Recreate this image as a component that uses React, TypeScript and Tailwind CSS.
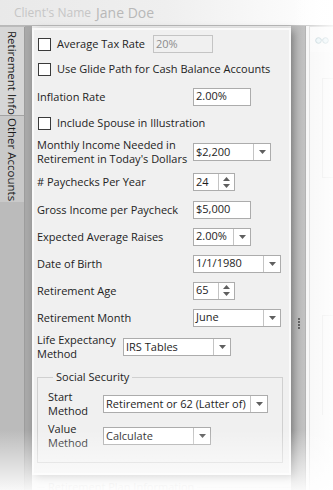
import React from 'react'

// ── Small controls ────────────────────────────────────────────────────────────

const Arrow = ({ up = false }: { up?: boolean }) => (
  <svg width="7" height="4" viewBox="0 0 7 4">
    <path d={up ? 'M0 4h7L3.5 0z' : 'M0 0h7L3.5 4z'} fill="#5f5f5f" />
  </svg>
)

const Checkbox = () => (
  <span className="block w-[13px] h-[13px] border border-[#3a3a3a] bg-white shrink-0" />
)

const TextBox = ({ value, w, disabled = false }: { value: string; w: string; disabled?: boolean }) => (
  <div
    className={`${w} h-[18px] flex items-center px-[2px] border ${
      disabled ? 'border-[#c4c4c4] bg-[#f0f0f0] text-[#8c8c8c]' : 'border-[#acacac] bg-white text-[#1e1e1e]'
    }`}
  >
    {value}
  </div>
)

const Combo = ({ value, w }: { value: string; w: string }) => (
  <div className={`${w} h-[18px] flex border border-[#acacac] bg-white`}>
    <div className="flex-1 flex items-center px-[2px] text-[#1e1e1e] whitespace-nowrap overflow-hidden">{value}</div>
    <div className="w-[17px] border-l border-[#c4c4c4] flex items-center justify-center">
      <Arrow />
    </div>
  </div>
)

const Spin = ({ value }: { value: string }) => (
  <div className="w-[42px] h-[18px] flex border border-[#acacac] bg-white">
    <div className="flex-1 flex items-center px-[2px] text-[#1e1e1e]">{value}</div>
    <div className="w-[16px] border-l border-[#c4c4c4] flex flex-col items-center justify-center gap-[3px]">
      <Arrow up />
      <Arrow />
    </div>
  </div>
)

// ── Form rows ─────────────────────────────────────────────────────────────────

const CheckRow = ({ label, h, children }: { label: string; h: string; children?: React.ReactNode }) => (
  <div className={`${h} flex items-center`}>
    <div className="ml-[1px]"><Checkbox /></div>
    <span className="ml-[6px] mr-[8px] whitespace-nowrap">{label}</span>
    {children}
  </div>
)

const FieldRow = ({
  label,
  h,
  lw = 'w-[156px]',
  children,
}: {
  label: React.ReactNode
  h: string
  lw?: string
  children: React.ReactNode
}) => (
  <div className={`${h} flex items-center`}>
    <div className={`${lw} shrink-0 leading-[14px]`}>{label}</div>
    {children}
  </div>
)

const SideTab = ({ label, h, active = false }: { label: string; h: string; active?: boolean }) => (
  <div
    className={`${h} flex justify-center border-r border-[#9d9d9d] ${
      active ? 'bg-[#d6d6d6] pt-[4px]' : 'bg-[#c9c9c9] border-t border-t-[#a3a3a3] pt-[2px]'
    }`}
  >
    <span className="[writing-mode:vertical-rl] whitespace-nowrap text-[11.5px] leading-[14px] text-[#1a1a1a]">
      {label}
    </span>
  </div>
)

// ── Main ──────────────────────────────────────────────────────────────────────

export default function App() {
  return (
    <div className="relative w-[333px] h-[490px] overflow-hidden bg-[#efefef] font-['Open_Sans',sans-serif] text-[11px] text-[#232323] flex flex-col">

      {/* Header */}
      <div className="h-[26px] shrink-0 flex items-center gap-[5px] pl-[14px] bg-linear-to-r from-[#e9e9e9] via-[#efefef] to-white border-b border-[#b9b9b9]">
        <span className="text-[12px] text-[#c6c6c6]">Client&apos;s Name</span>
        <span className="text-[14px] text-[#b8b8b8]">Jane Doe</span>
      </div>

      {/* Body */}
      <div className="flex flex-1 min-h-0">

        {/* Left tabs */}
        <div className="w-[25px] shrink-0 bg-[#bbbbbb] flex flex-col pt-[1px]">
          <SideTab label="Retirement Info" h="h-[88px]" active />
          <SideTab label="Other Accounts" h="h-[87px]" />
          <div className="flex-1 border-r border-[#9d9d9d]" />
        </div>
        <div className="w-[7px] shrink-0 bg-[#a9a9a9]" />

        {/* Center panel */}
        <div className="w-[259px] shrink-0 flex flex-col pt-[2px]">
          <div className="h-[447px] shrink-0 bg-[#f0f0f0] border-2 border-[#fafafa] shadow-[3px_3px_8px_rgba(0,0,0,0.35)] px-[3px] pt-[1px] flex flex-col relative z-10">
            <CheckRow label="Average Tax Rate" h="h-[26px]">
              <TextBox value="20%" w="w-[60px]" disabled />
            </CheckRow>
            <CheckRow label="Use Glide Path for Cash Balance Accounts" h="h-[25px]" />
            <FieldRow label="Inflation Rate" h="h-[29px]">
              <TextBox value="2.00%" w="w-[58px]" />
            </FieldRow>
            <CheckRow label="Include Spouse in Illustration" h="h-[25px]" />
            <FieldRow
              label={<>Monthly Income Needed in<br />Retirement in Today&apos;s Dollars</>}
              h="h-[32px]"
            >
              <Combo value="$2,200" w="w-[78px]" />
            </FieldRow>
            <FieldRow label="# Paychecks Per Year" h="h-[28px]">
              <Spin value="24" />
            </FieldRow>
            <FieldRow label="Gross Income per Paycheck" h="h-[27px]">
              <TextBox value="$5,000" w="w-[58px]" />
            </FieldRow>
            <FieldRow label="Expected Average Raises" h="h-[27px]">
              <Combo value="2.00%" w="w-[58px]" />
            </FieldRow>
            <FieldRow label="Date of Birth" h="h-[27px]">
              <Combo value="1/1/1980" w="w-[88px]" />
            </FieldRow>
            <FieldRow label="Retirement Age" h="h-[27px]">
              <Spin value="65" />
            </FieldRow>
            <FieldRow label="Retirement Month" h="h-[27px]">
              <Combo value="June" w="w-[88px]" />
            </FieldRow>
            <FieldRow label={<>Life Expectancy<br />Method</>} h="h-[32px]" lw="w-[86px]">
              <Combo value="IRS Tables" w="w-[108px]" />
            </FieldRow>

            {/* Social Security group */}
            <fieldset className="mt-[7px] w-[246px] h-[93px] border border-[#d0d0d0] pl-[10px] pt-[4px]">
              <legend className="ml-[5px] px-[3px] leading-[14px]">Social Security</legend>
              <FieldRow label={<>Start<br />Method</>} h="h-[32px]" lw="w-[55px]">
                <Combo value="Retirement or 62 (Latter of)" w="w-[165px]" />
              </FieldRow>
              <FieldRow label={<>Value<br />Method</>} h="h-[32px]" lw="w-[55px]">
                <Combo value="Calculate" w="w-[108px]" />
              </FieldRow>
            </fieldset>
          </div>

          {/* underlying page */}
          <div className="mt-[5px] ml-[5px] flex items-center">
            <div className="w-[8px] border-t border-[#e0e0e0]" />
            <span className="px-[3px] text-[#c8c8c8] leading-[14px]">Retirement Plan Information</span>
            <div className="flex-1 border-t border-[#e0e0e0]" />
          </div>
        </div>

        {/* Splitter */}
        <div className="w-[15px] shrink-0 bg-linear-to-r from-[#b5b5b5] to-[#a6a6a6] border-r border-[#8f8f8f] flex flex-col items-center pt-[292px]">
          <div className="flex flex-col gap-[1px] ml-[1px]">
            {[0, 1, 2, 3].map((i) => (
              <span key={i} className="block w-[2px] h-[2px] bg-[#3c3c3c]" />
            ))}
          </div>
        </div>

        {/* Right panel */}
        <div className="flex-1 bg-[#f4f4f4] flex flex-col">
          <div className="h-[26px] ml-[3px] border-l border-t border-[#cfcfcf] bg-[#f7f7f7] flex items-center pl-[5px]">
            <svg width="14" height="8" viewBox="0 0 14 8">
              <circle cx="3.5" cy="4.5" r="2.8" fill="#dceef3" stroke="#9db8c0" strokeWidth="1" />
              <circle cx="10.5" cy="4.5" r="2.8" fill="#dceef3" stroke="#9db8c0" strokeWidth="1" />
              <path d="M6.3 4 Q7 3 7.7 4" stroke="#9db8c0" fill="none" />
            </svg>
          </div>
          <div className="flex-1 ml-[3px] border-l border-[#cfcfcf] pl-[12px] pt-[26px] flex flex-col gap-[137px]">
            <div className="h-[100px] border-l border-t border-b border-[#dddddd]" />
            <div className="h-[100px] border-l border-t border-[#dddddd]" />
          </div>
        </div>
      </div>

      {/* Fades */}
      <div className="absolute right-0 top-0 bottom-0 w-[45px] bg-linear-to-r from-transparent to-white/85 pointer-events-none z-20" />
      <div className="absolute left-0 right-0 bottom-0 h-[60px] bg-linear-to-b from-transparent to-white/90 pointer-events-none z-20" />
    </div>
  )
}
